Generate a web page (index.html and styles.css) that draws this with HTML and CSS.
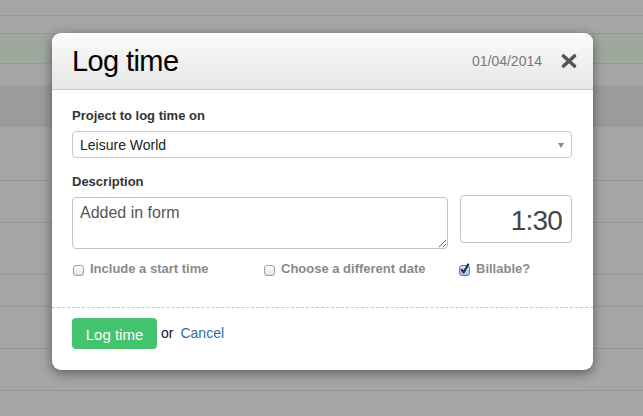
FILE: index.html
```html
<!DOCTYPE html>
<html>
<head>
<meta charset="utf-8">
<link rel="stylesheet" href="styles.css">
</head>
<body>
<div class="page">
  <div class="row r1"></div>
  <div class="row r2"></div>
  <div class="row r3 green"></div>
  <div class="row r4"></div>
  <div class="row r5 dark"></div>
  <div class="row r6"></div>
  <div class="row r7"></div>
  <div class="row r8"></div>
  <div class="row r9"></div>
  <div class="row r10"></div>
  <div class="row r11"></div>
  <div class="row r12"></div>
</div>

<div class="modal">
  <div class="modal-header">
    <h1 class="title">Log time</h1>
    <div class="header-right">
      <span class="date">01/04/2014</span>
      <svg class="close" width="16" height="14" viewBox="0 0 16 14"><path d="M2.5 2 L13.5 12 M13.5 2 L2.5 12" stroke="#555" stroke-width="3.6" stroke-linecap="round"/></svg>
    </div>
  </div>
  <div class="modal-body">
    <label class="field-label">Project to log time on</label>
    <div class="select">
      <span>Leisure World</span>
      <span class="arrow"></span>
    </div>
    <label class="field-label desc-label">Description</label>
    <div class="entry-row">
      <textarea class="desc">Added in form</textarea>
      <div class="time">1:30</div>
    </div>
    <div class="checks">
      <div class="check"><span class="box"></span>Include a start time</div>
      <div class="check"><span class="box"></span>Choose a different date</div>
      <div class="check"><span class="box checked"><svg width="11" height="12" viewBox="0 0 11 12"><path d="M2.2 6.2 L4.6 9.4 L9.6 0.8" fill="none" stroke="#1d2f4a" stroke-width="2.1" stroke-linejoin="round"/></svg></span>Billable?</div>
    </div>
  </div>
  <div class="modal-footer">
    <button class="btn">Log time</button>
    <span class="or">or</span>
    <a class="cancel">Cancel</a>
  </div>
</div>
</body>
</html>
```

FILE: styles.css
```css
html, body {
  margin: 0;
  padding: 0;
}
body {
  width: 643px;
  height: 416px;
  overflow: hidden;
  background: #a6a6a6;
  font-family: "Liberation Sans", Arial, sans-serif;
  position: relative;
}
.page {
  display: flex;
  flex-direction: column;
}
.row {
  border-bottom: 1px solid #979797;
  box-sizing: border-box;
}
.r1 { height: 16px; }
.r2 { height: 17px; border-bottom: none; }
.r3 { height: 31px; background: #9ea89d; border-top: 1px solid #939c92; border-bottom: 1px solid #939c92; }
.r4 { height: 21px; border-bottom: none; }
.r5 { height: 42px; background: #9b9b9c; border-bottom: none; }
.r6 { height: 54px; }
.r7 { height: 42px; }
.r8 { height: 52px; }
.r9 { height: 32px; }
.r10 { height: 42px; }
.r11 { height: 42px; }
.r12 { height: 30px; border-bottom: none; }

.modal {
  position: absolute;
  left: 52px;
  top: 33px;
  width: 541px;
  background: #fff;
  border-radius: 9px;
  box-shadow: 0 3px 12px rgba(0, 0, 0, 0.45);
  overflow: hidden;
}
.modal-header {
  height: 56px;
  border-bottom: 1px solid #c9c9c9;
  background: linear-gradient(#fbfbfb, #e6e6e6);
  display: flex;
  align-items: center;
  justify-content: space-between;
  padding: 0 16px 0 20px;
}
.title {
  margin: 0;
  font-weight: normal;
  font-size: 29px;
  letter-spacing: -0.6px;
  color: #000;
  padding-top: 1px;
}
.header-right {
  display: flex;
  align-items: center;
}
.date {
  font-size: 14px;
  color: #7a7a7a;
  margin-right: 19px;
}
.close {
  display: block;
}
.modal-body {
  padding: 18px 21px 30px 20px;
}
.field-label {
  display: block;
  font-weight: bold;
  font-size: 13px;
  line-height: 16px;
  color: #333;
}
.select {
  margin-top: 7px;
  height: 27px;
  box-sizing: border-box;
  border: 1px solid #c8c8c8;
  border-radius: 4px;
  display: flex;
  align-items: center;
  justify-content: space-between;
  padding: 0 7px 0 7px;
  font-size: 14px;
  color: #222;
}
.arrow {
  width: 0;
  height: 0;
  border-left: 3px solid transparent;
  border-right: 3px solid transparent;
  border-top: 5px solid #8a8a8a;
  margin-top: 1px;
}
.desc-label {
  margin-top: 16px;
}
.entry-row {
  display: flex;
  align-items: flex-start;
  gap: 12px;
  margin-top: 5px;
}
.desc {
  flex: 1;
  margin: 2px 0 0;
  height: 52px;
  box-sizing: border-box;
  border: 1px solid #c4c4c4;
  border-radius: 4px;
  font-family: "Liberation Sans", Arial, sans-serif;
  font-size: 16px;
  color: #555;
  padding: 6px 7px;
  resize: both;
  outline: none;
}
.time {
  width: 112px;
  height: 48px;
  box-sizing: border-box;
  border: 1px solid #c4c4c4;
  border-radius: 4px;
  font-size: 28px;
  letter-spacing: -0.8px;
  color: #444;
  text-align: right;
  padding: 9px 9px 0 0;
  line-height: 32px;
}
.checks {
  display: grid;
  grid-template-columns: 191px 195px 1fr;
  margin-top: 12px;
}
.check {
  display: flex;
  align-items: center;
  font-size: 13px;
  font-weight: bold;
  line-height: 16px;
  color: #8a8a8a;
}
.box {
  width: 11px;
  height: 11px;
  box-sizing: border-box;
  border: 1px solid #9c9c9c;
  border-radius: 3px;
  background: linear-gradient(#ffffff, #e4e4e4);
  margin: 2px 6px 0 1px;
  position: relative;
}
.box.checked {
  background: linear-gradient(#dce9f8, #a9c4e6);
  border-color: #5b7aa5;
}
.box.checked svg {
  position: absolute;
  left: -1px;
  top: -3px;
}
.modal-footer {
  border-top: 1px dashed #c8c8c8;
  padding: 10px 20px 21px;
  display: flex;
  align-items: center;
}
.btn {
  height: 31px;
  width: 85px;
  border: none;
  border-radius: 4px;
  background: #45c46e;
  color: #fff;
  font-family: "Liberation Sans", Arial, sans-serif;
  font-size: 15px;
  padding: 0;
  padding-top: 1px;
}
.or {
  font-size: 14px;
  color: #111;
  margin-left: 4px;
  margin-top: -2px;
}
.cancel {
  font-size: 14px;
  color: #2c6ea6;
  margin-left: 7px;
  margin-top: -2px;
}
```
